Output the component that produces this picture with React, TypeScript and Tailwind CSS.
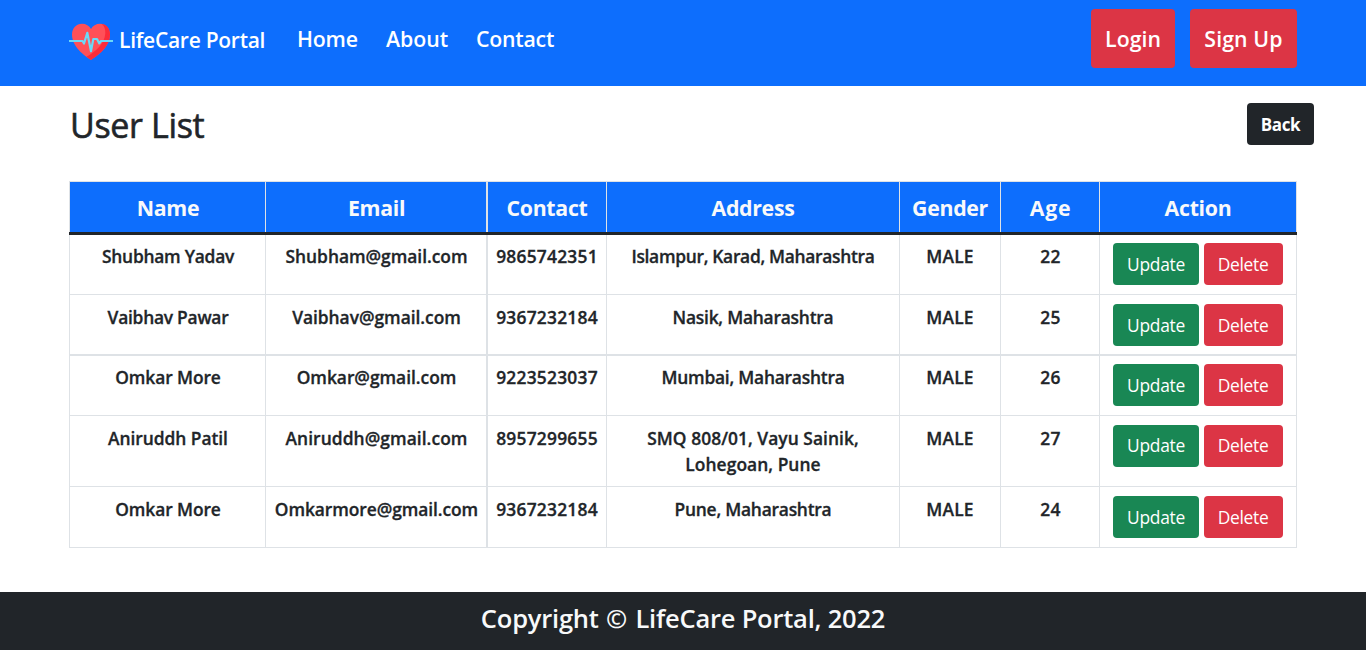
import React from "react";

type User = {
  name: string;
  nameCls: string;
  email: string;
  emailCls: string;
  contact: string;
  address: string[];
  addressCls: string;
  gender: string;
  age: string;
  row: string;
  cell: string;
  actions: string;
  label: string;
};

const users: User[] = [
  {
    name: "Shubham Yadav",
    nameCls: "tracking-[-0.25px]",
    email: "Shubham@gmail.com",
    emailCls: "tracking-[-0.03px]",
    contact: "9865742351",
    address: ["Islampur, Karad, Maharashtra"],
    addressCls: "tracking-[-0.3px]",
    gender: "MALE",
    age: "22",
    row: "h-[59px]",
    cell: "pt-[8px]",
    actions: "pt-[8px]",
    label: "pb-px",
  },
  {
    name: "Vaibhav Pawar",
    nameCls: "tracking-[-0.25px]",
    email: "Vaibhav@gmail.com",
    emailCls: "tracking-[-0.03px]",
    contact: "9367232184",
    address: ["Nasik, Maharashtra"],
    addressCls: "tracking-[-0.23px]",
    gender: "MALE",
    age: "25",
    row: "h-[60px] border-t",
    cell: "pt-[9px]",
    actions: "pt-[9px]",
    label: "pb-px",
  },
  {
    name: "Omkar More",
    nameCls: "tracking-[-0.1px]",
    email: "Omkar@gmail.com",
    emailCls: "tracking-[-0.03px]",
    contact: "9223523037",
    address: ["Mumbai, Maharashtra"],
    addressCls: "tracking-[-0.23px]",
    gender: "MALE",
    age: "26",
    row: "h-[61px] border-t-2",
    cell: "pt-[8px]",
    actions: "pt-[8px]",
    label: "pb-px",
  },
  {
    name: "Aniruddh Patil",
    nameCls: "tracking-[-0.05px]",
    email: "Aniruddh@gmail.com",
    emailCls: "tracking-[0.06px]",
    contact: "8957299655",
    address: ["SMQ 808/01, Vayu Sainik,", "Lohegoan, Pune"],
    addressCls: "tracking-[0.05px]",
    gender: "MALE",
    age: "27",
    row: "h-[71px] border-t",
    cell: "pt-[9px]",
    actions: "pt-[9px]",
    label: "pb-[3px]",
  },
  {
    name: "Omkar More",
    nameCls: "tracking-[-0.1px]",
    email: "Omkarmore@gmail.com",
    emailCls: "tracking-[-0.08px]",
    contact: "9367232184",
    address: ["Pune, Maharashtra"],
    addressCls: "tracking-[-0.23px]",
    gender: "MALE",
    age: "24",
    row: "h-[62px] border-y",
    cell: "pt-[9px]",
    actions: "pt-[9px]",
    label: "pb-px",
  },
];

const GRID = "grid grid-cols-[196px_221px_120px_293px_101px_99px_198px] text-center whitespace-nowrap border-[#dee2e6]";

const headers = [
  { label: "Name", cls: "border-l pl-px" },
  { label: "Email", cls: "border-l pl-px" },
  { label: "Contact", cls: "border-l-2" },
  { label: "Address", cls: "border-l" },
  { label: "Gender", cls: "border-l" },
  { label: "Age", cls: "border-l pl-px tracking-[0.8px]" },
  { label: "Action", cls: "border-x" },
];

function HeartLogo() {
  return (
    <svg width="44" height="44" viewBox="0 0 44 44" className="shrink-0">
      <path
        d="M22 40 C15 35.500 3 26.500 3 14.500 C3 8.200 7.400 3.700 13 3.700 C17 3.700 20.300 5.700 22 8.900 C23.700 5.700 27 3.700 31 3.700 C36.600 3.700 41 8.200 41 14.500 C41 26.500 29 35.500 22 40Z"
        fill="#ff5058"
      />
      <path
        d="M32.500 3.800 C37.400 4.400 41 8.500 41 14.500 C41 26.500 29 35.500 22 40 C20.600 39.200 19 38 17.400 36.700 C27 31.500 35.500 24 36.300 13.500 C36.500 9 35.300 6 32.500 3.800Z"
        fill="#fb2b3a"
      />
      <path
        d="M0 21H13.500L15 23.500L18.300 12.800L22 31.200L24.300 19H28L30.300 23.400L32 21H44"
        fill="none"
        stroke="#6bd9f7"
        strokeWidth="2.2"
        strokeLinejoin="round"
      />
    </svg>
  );
}

function UserRow({ user }: { user: User }) {
  const cell = `border-[#dee2e6] [-webkit-text-stroke:0.3px_#212529] ${user.cell}`;
  return (
    <div className={`${GRID} ${user.row} text-[17.4px] leading-[26px] font-semibold`}>
      <div className={`${cell} border-l pl-px ${user.nameCls}`}>{user.name}</div>
      <div className={`${cell} border-l pl-px ${user.emailCls}`}>{user.email}</div>
      <div className={`${cell} border-l-2 tracking-[0.22px]`}>{user.contact}</div>
      <div className={`${cell} border-l ${user.addressCls}`}>
        {user.address.map((line) => (
          <div key={line}>{line}</div>
        ))}
      </div>
      <div className={`${cell} border-l tracking-[0.2px]`}>{user.gender}</div>
      <div className={`${cell} border-l pl-px tracking-[0.2px]`}>{user.age}</div>
      <div className={`flex items-start gap-[5px] border-x border-[#dee2e6] pl-[13px] font-normal text-white ${user.actions}`}>
        <button className={`h-[42px] w-[86px] rounded-[4px] bg-[#198754] text-[17.4px] tracking-[-0.3px] ${user.label}`}>
          Update
        </button>
        <button className={`h-[42px] w-[79px] rounded-[4px] bg-[#dc3545] pr-px text-[17.4px] tracking-[-0.3px] ${user.label}`}>
          Delete
        </button>
      </div>
    </div>
  );
}

export default function App() {
  return (
    <div className="h-[651px] overflow-hidden bg-white font-['Open_Sans','Noto_Sans',sans-serif] text-[#212529]">
      <nav className="flex h-[86px] items-start bg-[#0d6efd] px-[69px] text-[21.3px] leading-[32px] font-semibold whitespace-nowrap text-white">
        <div className="flex items-start pt-[20px]">
          <HeartLogo />
          <span className="w-[184px] pt-[4px] pl-[6px] text-[21px] tracking-[-0.27px]">LifeCare Portal</span>
        </div>
        <a className="w-[89px] pt-[23px] tracking-[-0.2px]">Home</a>
        <a className="w-[90px] pt-[23px]">About</a>
        <a className="pt-[23px] tracking-[-0.25px]">Contact</a>
        <div className="ml-auto flex gap-[15px] pt-[9px]">
          <button className="h-[59px] w-[84px] rounded-[4px] bg-[#dc3545] pt-px">Login</button>
          <button className="h-[59px] w-[107px] rounded-[4px] bg-[#dc3545] pt-px tracking-[0.1px]">Sign Up</button>
        </div>
      </nav>

      <main className="h-[506px] pl-[69px]">
        <div className="flex h-[95px] items-start justify-between pr-[52px]">
          <h1 className="pt-[17px] pl-px text-[34px] leading-[44px] font-medium tracking-[-0.35px] [-webkit-text-stroke:0.6px_#212529]">
            User List
          </h1>
          <button className="mt-[17px] h-[42px] w-[67px] rounded-[4px] bg-[#212529] pt-[2px] text-[17px] font-bold tracking-[-0.4px] text-white">
            Back
          </button>
        </div>

        <div className="w-[1228px]">
          <div className={`${GRID} h-[51px] border-t bg-[#0d6efd] text-[21.3px] font-bold tracking-[-0.3px] text-[#f8f9fa]`}>
            {headers.map((h) => (
              <div key={h.label} className={`border-[#dee2e6] pt-[10px] leading-[32px] ${h.cls}`}>
                {h.label}
              </div>
            ))}
          </div>
          <div className="h-[3px] bg-[#212529]" />
          {users.map((u, i) => (
            <UserRow key={i} user={u} />
          ))}
        </div>
      </main>

      <footer className="h-[58px] bg-[#212529] pt-[7px] text-center text-[25.5px] leading-[38px] font-semibold tracking-[-0.22px] text-[#f8f9fa]">
        Copyright <span className="mr-[2px] ml-[1px]">©</span> LifeCare Portal, 2022
      </footer>
    </div>
  );
}
